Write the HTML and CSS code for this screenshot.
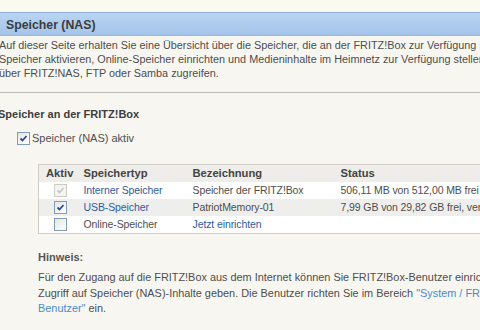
FILE: index.html
```html
<!DOCTYPE html>
<html lang="de">
<head>
<meta charset="utf-8">
<link rel="stylesheet" href="styles.css">
</head>
<body>
<div class="top"></div>
<div class="titlebar"><span class="title">Speicher (NAS)</span></div>
<div class="content">
  <p class="intro">Auf dieser Seite erhalten Sie eine Übersicht über die Speicher, die an der FRITZ!Box zur Verfügung stehen. Sie können<br>Speicher aktivieren, Online-Speicher einrichten und Medieninhalte im Heimnetz zur Verfügung stellen. Sie können<br>über FRITZ!NAS, FTP oder Samba zugreifen.</p>
  <div class="rule"></div>
  <h2 class="section">Speicher an der FRITZ!Box</h2>
  <label class="nasrow"><span class="cb checked"><svg viewBox="0 0 11 11"><path d="M2.5 5.5 L4.5 7.5 L8.5 3" /></svg></span><span>Speicher (NAS) aktiv</span></label>
  <div class="tablewrap">
    <table class="storage">
      <colgroup><col class="w1"><col class="w2"><col class="w3"><col class="w4"></colgroup>
      <thead>
        <tr><th class="c1">Aktiv</th><th>Speichertyp</th><th>Bezeichnung</th><th>Status</th></tr>
      </thead>
      <tbody>
        <tr><td class="c1"><span class="cb disabled"><svg viewBox="0 0 11 11"><path d="M2.5 5.5 L4.5 7.5 L8.5 3" /></svg></span></td><td class="link">Interner Speicher</td><td>Speicher der FRITZ!Box</td><td>506,11 MB von 512,00 MB frei</td></tr>
        <tr class="alt"><td class="c1"><span class="cb checked"><svg viewBox="0 0 11 11"><path d="M2.5 5.5 L4.5 7.5 L8.5 3" /></svg></span></td><td class="link">USB-Speicher</td><td>PatriotMemory-01</td><td>7,99 GB von 29,82 GB frei, verfügbar</td></tr>
        <tr><td class="c1"><span class="cb"></span></td><td>Online-Speicher</td><td class="link">Jetzt einrichten</td><td></td></tr>
      </tbody>
    </table>
  </div>
  <h3 class="hint">Hinweis:</h3>
  <p class="hinttext">Für den Zugang auf die FRITZ!Box aus dem Internet können Sie FRITZ!Box-Benutzer einrichten und diesen<br>Zugriff auf Speicher (NAS)-Inhalte geben. Die Benutzer richten Sie im Bereich <span class="lnk">"System / FRITZ!Box-<br>Benutzer"</span> ein.</p>
</div>
</body>
</html>
```

FILE: styles.css
```css
html, body {
  margin: 0;
  padding: 0;
  background: #f8f6f1;
  overflow: hidden;
}
body {
  width: 480px;
  height: 330px;
  font-family: "Liberation Sans", Arial, sans-serif;
  font-size: 11px;
  color: #4e4e4e;
}
.top {
  height: 12px;
  background: #fbfaf1;
}
.titlebar {
  height: 21px;
  border-top: 1px solid #8eaed6;
  border-bottom: 1px solid #9db7d6;
  background: linear-gradient(#bad5f2, #a4c4ea);
  display: flex;
  align-items: center;
  padding-top: 1px;
  box-sizing: content-box;
}
.title {
  padding-left: 6px;
  font-weight: bold;
  font-size: 12.3px;
  color: #3c3c3c;
}
.content {
  margin-left: -1px;
  width: 640px;
}
.intro {
  margin: 2px 0 0 0;
  font-size: 10.85px;
  line-height: 14px;
  white-space: nowrap;
}
.rule {
  height: 1px;
  background: #b9b8b4;
  margin: 12px 0 0 0;
}
.section {
  margin: 14px 0 0 -1px;
  font-size: 11px;
  font-weight: bold;
  color: #3d3d3d;
  line-height: 14px;
}
.nasrow {
  display: flex;
  align-items: center;
  gap: 2px;
  margin: 10px 0 0 18px;
  height: 14px;
}
.cb {
  width: 11px;
  height: 11px;
  border: 1px solid #7f9db9;
  background: linear-gradient(135deg, #e6e6e0, #ffffff);
  display: inline-flex;
  box-sizing: content-box;
}
.cb svg {
  width: 11px;
  height: 11px;
  fill: none;
  stroke: #2b48a8;
  stroke-width: 1.8;
}
.cb.disabled {
  border-color: #cbcbc4;
  background: #f4f4f0;
}
.cb.disabled svg {
  stroke: #c9c9c3;
}
.tablewrap {
  margin: 19px 0 0 39px;
}
.storage {
  border-collapse: collapse;
  border: 1px solid #cfcdc6;
  width: 520px;
  table-layout: fixed;
  background: #ffffff;
}
.w1 { width: 45px; }
.w2 { width: 109px; }
.w3 { width: 148px; }
.storage th, .storage td {
  padding: 0;
  height: 17px;
  text-align: left;
  white-space: nowrap;
  line-height: 17px;
}
.storage td {
  font-size: 10.5px;
  letter-spacing: -0.1px;
}
.storage th {
  font-weight: bold;
  color: #444;
  background: #eeedea;
  font-size: 11.2px;
}
.storage th.c1 { padding-left: 7px; }
.storage td.c1 { padding-left: 15px; }
.storage td.c1 .cb { vertical-align: middle; margin-top: -2px; }
.storage tr.alt td { background: #eeeeec; }
.storage td.link { color: #2e5c9e; }
.hint {
  margin: 16px 0 0 39px;
  font-size: 11px;
  font-weight: bold;
  color: #555;
  line-height: 14px;
}
.hinttext {
  margin: 6px 0 0 39px;
  font-size: 10.9px;
  line-height: 15.5px;
  white-space: nowrap;
}
.lnk { color: #4b8bc8; }
```
